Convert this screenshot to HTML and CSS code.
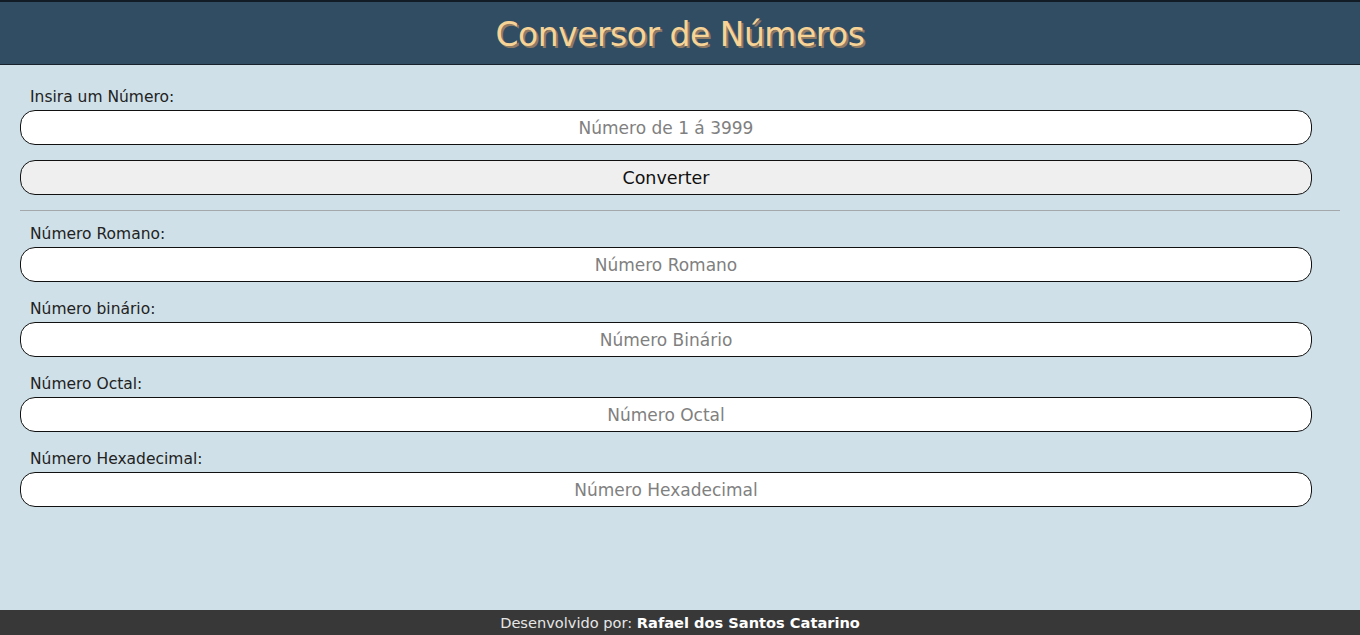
FILE: index.html
```html
<!DOCTYPE html>
<html lang="pt-BR">
<head>
<meta charset="utf-8">
<title>Conversor de Números</title>
<link rel="stylesheet" href="styles.css">
</head>
<body>
<div class="page">
  <header class="header">
    <h1 class="title">Conversor de Números</h1>
  </header>
  <main class="main">
    <div class="group">
      <label class="label" for="num">Insira um Número:</label>
      <input class="field" id="num" type="text" placeholder="Número de 1 á 3999">
    </div>
    <button class="btn" type="button">Converter</button>
    <hr class="divider">
    <div class="group">
      <label class="label">Número Romano:</label>
      <input class="field" type="text" placeholder="Número Romano" readonly>
    </div>
    <div class="group">
      <label class="label">Número binário:</label>
      <input class="field" type="text" placeholder="Número Binário" readonly>
    </div>
    <div class="group">
      <label class="label">Número Octal:</label>
      <input class="field" type="text" placeholder="Número Octal" readonly>
    </div>
    <div class="group">
      <label class="label">Número Hexadecimal:</label>
      <input class="field" type="text" placeholder="Número Hexadecimal" readonly>
    </div>
  </main>
  <footer class="footer">
    Desenvolvido por: <strong class="author">Rafael dos Santos Catarino</strong>
  </footer>
</div>
</body>
</html>
```

FILE: styles.css
```css
* { box-sizing: border-box; }
html, body { margin: 0; padding: 0; height: 100%; }
body {
  background: #cfe0e8;
  font-family: "DejaVu Sans", sans-serif;
  color: #1a1a1a;
}
.page {
  min-height: 100%;
  display: flex;
  flex-direction: column;
}
.header {
  height: 65px;
  background: #314d64;
  border-top: 2px solid #121c26;
  border-bottom: 1px solid #17222c;
  display: flex;
  align-items: center;
  justify-content: center;
}
.title {
  margin: 0;
  font-size: 33px;
  font-weight: 500;
  color: #f7d396;
  text-shadow: 2px 2px 0 #8f7a66;
  letter-spacing: -0.5px;
  padding-top: 3px;
}
.main {
  flex: 1;
  padding: 20px 20px 0 20px;
  display: flex;
  flex-direction: column;
}
.group {
  display: flex;
  flex-direction: column;
  margin-bottom: 15px;
}
.label {
  font-size: 15.5px;
  padding-left: 10px;
  height: 25px;
  line-height: 25px;
  color: #222;
}
.field, .btn {
  width: 1292px;
  height: 35px;
  border: 1px solid #111;
  border-radius: 15px;
  background: #fff;
  font-family: inherit;
  font-size: 17px;
  text-align: center;
  color: #222;
  outline: none;
}
.field::placeholder { color: #808080; }
.btn {
  background: #efefef;
  color: #111;
  font-size: 17.5px;
}
.divider {
  margin: 15px 0 11px 0;
  width: 1320px;
  border: 0;
  border-top: 1px solid #a5a8aa;
  height: 0;
}
.footer {
  height: 25px;
  background: #383838;
  color: #e6e6e6;
  font-size: 14.6px;
  text-align: center;
  line-height: 25px;
}
.author {
  color: #fff;
  font-weight: 600;
}
```
